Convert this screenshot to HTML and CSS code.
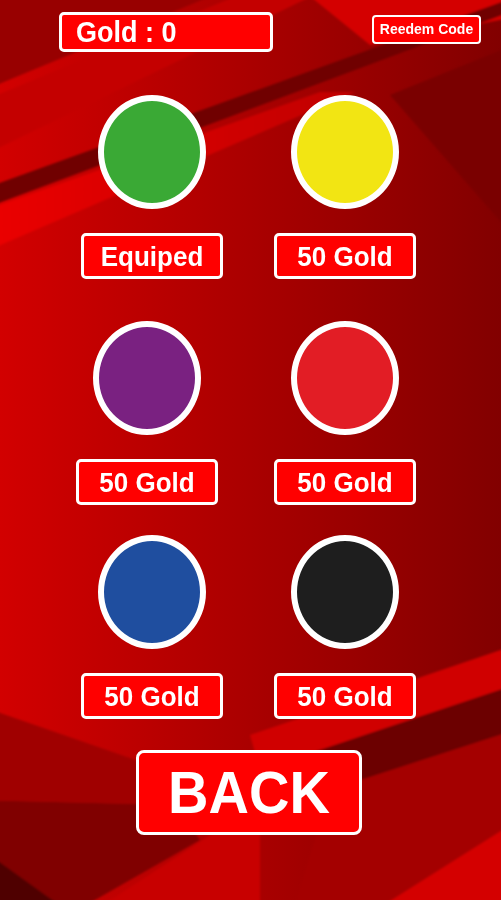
FILE: index.html
```html
<!DOCTYPE html>
<html lang="en">
<head>
    <meta charset="UTF-8">
    <meta name="viewport" content="width=device-width, initial-scale=1.0">
    <title>Shop</title>
    <link rel="stylesheet" href="styles.css">
</head>
<body>
    <div class="screen">
        <!-- red backdrop behind the shop -->
        <svg class="backdrop" viewBox="0 0 501 900" preserveAspectRatio="none">
            <defs>
                <linearGradient id="base" x1="0" y1="0" x2="1" y2="0">
                    <stop offset="0" stop-color="#d20000"/>
                    <stop offset="1" stop-color="#820000"/>
                </linearGradient>
                <linearGradient id="bright" x1="0" y1="0" x2="1" y2="0">
                    <stop offset="0" stop-color="#ec0000"/>
                    <stop offset="1" stop-color="#c00000"/>
                </linearGradient>
                <filter id="soft" x="-10%" y="-10%" width="120%" height="120%">
                    <feGaussianBlur stdDeviation="1.2"/>
                </filter>
            </defs>
            <rect width="501" height="900" fill="url(#base)"/>

            <g filter="url(#soft)">
                <!-- top -->
                <polygon points="-20,-20 250,-20 -20,92" fill="#980000"/>
                <polygon points="-20,102 275,-20 345,-20 -20,157" fill="#c40000"/>
                <polygon points="290,-20 521,-20 521,16 370,45" fill="#d40000"/>
                <polygon points="-20,212 320,92 355,92 -20,254" fill="url(#bright)"/>
                <polygon points="-20,190 521,-5 521,8 -20,210" fill="#700000"/>
                <polygon points="390,95 521,42 521,245" fill="#7a0000"/>

                <!-- bottom left -->
                <polygon points="-20,706 150,765 175,805 -20,800" fill="#a00000"/>
                <polygon points="-20,800 175,805 200,840 60,920 -20,920" fill="#800000"/>
                <polygon points="-20,848 80,920 -20,920" fill="#500000"/>
                <polygon points="80,920 210,835 260,820 260,920" fill="#c80000"/>

                <!-- bottom right -->
                <polygon points="250,735 521,643 521,683 260,770" fill="#d00000"/>
                <polygon points="260,770 521,683 521,728 330,790" fill="#6c0000"/>
                <polygon points="330,790 521,728 521,818 360,920 290,920" fill="#a40000"/>
                <polygon points="360,920 521,818 521,920" fill="#d40000"/>
            </g>
        </svg>

        <header class="topbar">
            <div class="gold-box"><span class="label">Gold : 0</span></div>
            <button class="redeem"><span class="label">Reedem Code</span></button>
        </header>

        <main class="shop">
            <div class="row">
                <div class="item">
                    <div class="ball ball-green"></div>
                    <button class="buy"><span class="label">Equiped</span></button>
                </div>
                <div class="item">
                    <div class="ball ball-yellow"></div>
                    <button class="buy"><span class="label">50 Gold</span></button>
                </div>
            </div>
            <div class="row row-2">
                <div class="item item-nudge">
                    <div class="ball ball-purple"></div>
                    <button class="buy"><span class="label">50 Gold</span></button>
                </div>
                <div class="item">
                    <div class="ball ball-red"></div>
                    <button class="buy"><span class="label">50 Gold</span></button>
                </div>
            </div>
            <div class="row row-3">
                <div class="item">
                    <div class="ball ball-blue"></div>
                    <button class="buy"><span class="label">50 Gold</span></button>
                </div>
                <div class="item">
                    <div class="ball ball-black"></div>
                    <button class="buy"><span class="label">50 Gold</span></button>
                </div>
            </div>
        </main>

        <div class="footer">
            <button class="back"><span class="label">BACK</span></button>
        </div>
    </div>
</body>
</html>
```

FILE: styles.css
```css
body {
    margin: 0;
    font-family: "Liberation Sans", Arial, sans-serif;
    background: #8a0000;
}
.screen {
    position: relative;
    width: 501px;
    height: 900px;
    overflow: hidden;
}
.backdrop {
    position: absolute;
    top: 0;
    left: 0;
    width: 501px;
    height: 900px;
    z-index: 0;
}
.topbar, .shop, .footer {
    position: relative;
    z-index: 1;
}
.label {
    display: inline-block;
    transform: scaleY(1.06);
}
button {
    font-family: inherit;
    font-weight: bold;
    color: white;
    background: #ff0000;
    border: 3px solid white;
    border-radius: 5px;
    padding: 0;
    margin: 0;
    box-sizing: border-box;
    cursor: pointer;
}
.topbar {
    display: flex;
    justify-content: space-between;
    align-items: flex-start;
    padding: 12px 20px 0 59px;
}
.gold-box {
    width: 214px;
    height: 40px;
    box-sizing: border-box;
    border: 3px solid white;
    border-radius: 5px;
    background: #ff0000;
    color: white;
    font-weight: bold;
    font-size: 27px;
    line-height: 34px;
    padding-left: 14px;
}
.redeem {
    width: 109px;
    height: 29px;
    margin-top: 3px;
    border-width: 2px;
    border-radius: 4px;
    font-size: 14px;
    line-height: 25px;
}
.shop {
    margin-top: 43px;
}
.row {
    display: flex;
    gap: 51px;
    padding-left: 81px;
}
.row-2 {
    margin-top: 42px;
}
.row-3 {
    margin-top: 30px;
}
.item {
    width: 142px;
    display: flex;
    flex-direction: column;
    align-items: center;
    gap: 24px;
}
.item-nudge {
    margin: 0 5px 0 -5px;
}
.ball {
    width: 108px;
    height: 114px;
    box-sizing: border-box;
    border: 6px solid white;
    border-radius: 50%;
}
.ball-green { background: #3aa935; }
.ball-yellow { background: #f2e513; }
.ball-purple { background: #7a2181; }
.ball-red { background: #e21d25; }
.ball-blue { background: #1f4e9f; }
.ball-black { background: #1e1e1e; }
.buy {
    width: 142px;
    height: 46px;
    font-size: 26px;
    line-height: 40px;
}
.footer {
    display: flex;
    justify-content: center;
    margin-top: 31px;
    padding-right: 3px;
}
.back {
    width: 226px;
    height: 85px;
    border-radius: 8px;
    font-size: 56px;
    line-height: 79px;
}
```
